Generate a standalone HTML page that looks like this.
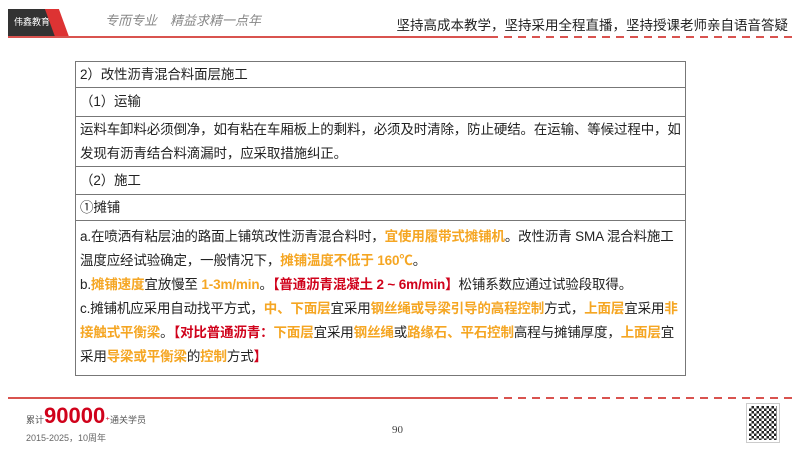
<!DOCTYPE html>
<html><head><meta charset="utf-8"><style>
*{margin:0;padding:0;box-sizing:border-box}
body{width:800px;height:450px;background:#fff;position:relative;overflow:hidden;font-family:"Liberation Sans","Noto Sans CJK SC",sans-serif;color:#222}
.logo{position:absolute;left:8px;top:9px;width:48px;height:27px;background:#333;color:#fff;font-size:9px;line-height:27px;text-align:center}
.red1{position:absolute;left:50px;top:9px;width:14px;height:28px;background:#d33;transform:skewX(20deg)}
.slogan{position:absolute;right:12px;top:14px;font-size:13.5px;color:#222}
.hl{position:absolute;left:8px;top:36px;width:405px;height:2px;background:#d9534f}
.hr{position:absolute;left:490px;top:36px;width:302px;height:2px;background:repeating-linear-gradient(90deg,#d9534f 0 8px,transparent 8px 14px)}
.hl2{position:absolute;left:8px;top:397px;width:405px;height:2px;background:#d9534f}
table{position:absolute;left:75px;top:61px;width:611px;border-collapse:collapse;font-size:13.5px;letter-spacing:-0.15px}
td{border:1px solid #777;padding:0 2px 0 4px;line-height:24px}
.o{color:#f5a623;font-weight:bold}
.r{color:#d0021b;font-weight:bold}
.foot1{position:absolute;left:26px;top:403px;font-size:9px;color:#555}
.foot1 b{color:#d0021b;font-size:22px}
.foot2{position:absolute;left:26px;top:431px;font-size:9px;color:#666}
.pg{position:absolute;left:392px;top:424px;font-size:11px;font-family:"Liberation Serif",serif;color:#444}
.qr{position:absolute;left:747px;top:404px;width:32px;height:38px;background:repeating-conic-gradient(#222 0 25%,#fff 0 50%) 0 0/5px 5px;border:2px solid #fff;outline:1px solid #ccc}
</style></head><body>
<div class="logo">伟鑫教育</div><div class="red1"></div>
<div style="position:absolute;left:105px;top:10px;font-size:13px;color:#888;font-style:italic">专而专业　精益求精一点年</div>
<div class="slogan">坚持高成本教学，坚持采用全程直播，坚持授课老师亲自语音答疑</div>
<div class="hl"></div><div class="hl" style="left:413px;width:77px"></div><div class="hr"></div>
<table>
<tr><td style="height:26px">2）改性沥青混合料面层施工</td></tr>
<tr><td style="height:29px">（1）运输</td></tr>
<tr><td style="height:50px">运料车卸料必须倒净，如有粘在车厢板上的剩料，必须及时清除，防止硬结。在运输、等候过程中，如发现有沥青结合料滴漏时，应采取措施纠正。</td></tr>
<tr><td style="height:28px">（2）施工</td></tr>
<tr><td style="height:26px">①摊铺</td></tr>
<tr><td style="height:155px;padding-top:1px;padding-bottom:3px">a.在喷洒有粘层油的路面上铺筑改性沥青混合料时，<span class="o">宜使用履带式摊铺机</span>。改性沥青 SMA 混合料施工温度应经试验确定，一般情况下，<span class="o">摊铺温度不低于 160℃</span>。<br>b.<span class="o">摊铺速度</span>宜放慢至 <span class="o">1-3m/min</span>。<span class="r">【普通沥青混凝土 2 ~ 6m/min】</span>松铺系数应通过试验段取得。<br>c.摊铺机应采用自动找平方式，<span class="o">中、下面层</span>宜采用<span class="o">钢丝绳或导梁引导的高程控制</span>方式，<span class="o">上面层</span>宜采用<span class="o">非接触式平衡梁</span>。<span class="r">【对比普通沥青：</span><span class="o">下面层</span>宜采用<span class="o">钢丝绳</span>或<span class="o">路缘石、平石控制</span>高程与摊铺厚度，<span class="o">上面层</span>宜采用<span class="o">导梁或平衡梁</span>的<span class="o">控制</span>方式<span class="r">】</span></td></tr>
</table>
<div class="hl2"></div><div class="hl2" style="left:413px;width:77px"></div><div class="hr" style="top:397px"></div>
<div class="foot1">累计<b>90000</b><span style="color:#d0021b">⁺</span>通关学员</div>
<div class="foot2">2015-2025，10周年</div>
<div class="pg">90</div>
<div class="qr"></div>
</body></html>
